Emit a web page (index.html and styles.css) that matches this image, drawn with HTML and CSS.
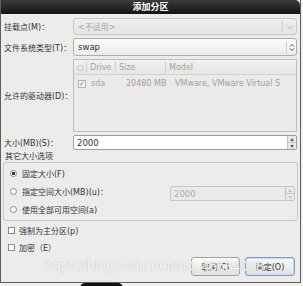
FILE: index.html
```html
<!DOCTYPE html>
<html>
<head>
    <meta charset="UTF-8">
    <title>添加分区</title>
    <link rel="stylesheet" href="styles.css">
</head>
<body>
    <div class="dialog">
        <div class="titlebar">添加分区</div>
        <div class="content">
            <div class="form">
                <div class="label">挂载点(M)：</div>
                <div class="combo combo-off">
                    <span class="combo-text">&lt;不适用&gt;</span>
                    <span class="combo-btn">
                        <svg width="8" height="6" viewBox="0 0 8 6"><path d="M1 1.5 L4 4.5 L7 1.5" fill="none" stroke="#b5b3b0" stroke-width="1"/></svg>
                    </span>
                </div>

                <div class="label">文件系统类型(T)：</div>
                <div class="combo">
                    <span class="combo-text">swap</span>
                    <span class="combo-btn narrow">
                        <svg width="6" height="9" viewBox="0 0 6 9"><path d="M1 3.5 L3 1.5 L5 3.5 M1 5.5 L3 7.5 L5 5.5" fill="none" stroke="#555" stroke-width="1"/></svg>
                    </span>
                </div>

                <div class="label">允许的驱动器(D)：</div>
                <div class="drives">
                    <div class="drives-head">
                        <span class="col c1">○</span>
                        <span class="col c2">Drive</span>
                        <span class="col c3">Size</span>
                        <span class="col c4">Model</span>
                    </div>
                    <div class="drives-row">
                        <span class="c1"><span class="tick">✓</span></span>
                        <span class="c2 pad-sda">sda</span>
                        <span class="c3 pad-size">20480 MB</span>
                        <span class="c4 pad-model">VMware, VMware Virtual S</span>
                    </div>
                </div>

                <div class="label">大小(MB)(S)：</div>
                <div class="spin">
                    <span class="spin-text">2000</span>
                    <span class="spin-btns">
                        <span class="spin-up">▴</span>
                        <span class="spin-down">▾</span>
                    </span>
                </div>
            </div>

            <div class="legend">其它大小选项</div>
            <div class="frame">
                <div class="opt">
                    <span class="radio on"></span>
                    <span>固定大小(F)</span>
                </div>
                <div class="opt">
                    <span class="radio"></span>
                    <span>指定空间大小(MB)(u)：</span>
                    <div class="spin spin-off">
                        <span class="spin-text">2000</span>
                        <span class="spin-btns">
                            <span class="spin-up">▴</span>
                            <span class="spin-down">▾</span>
                        </span>
                    </div>
                </div>
                <div class="opt">
                    <span class="radio"></span>
                    <span>使用全部可用空间(a)</span>
                </div>
            </div>

            <div class="checks">
                <div class="check-row"><span class="box"></span><span>强制为主分区(p)</span></div>
                <div class="check-row"><span class="box"></span><span>加密（E）</span></div>
            </div>

            <div class="actions">
                <button class="btn">取消(C)</button>
                <button class="btn btn-focus">确定(O)</button>
            </div>
        </div>
    </div>
    <div class="shadow-blob"></div>
    <div class="watermark">https://blog.csdn.net/m0_46634038</div>
</body>
</html>
```

FILE: styles.css
```css
* {
    box-sizing: border-box;
}

body {
    margin: 0;
    background: #f1f1f1;
    font-family: "DejaVu Sans", "Noto Sans CJK SC", sans-serif;
    font-size: 8px;
    color: #2e3436;
    position: relative;
    overflow: hidden;
}

.dialog {
    width: 301px;
    height: 283px;
    background: #edeceb;
    border: 1px solid #5e5e5e;
    border-top: none;
    display: flex;
    flex-direction: column;
}

.titlebar {
    height: 14px;
    line-height: 14px;
    background: linear-gradient(#3b3b3b, #141414);
    color: #fff;
    font-weight: bold;
    font-size: 9px;
    text-align: center;
    border-radius: 0 5px 0 0;
}

.content {
    padding: 4px 2px 0 3px;
    flex: 1;
    display: flex;
    flex-direction: column;
}

.form {
    display: grid;
    grid-template-columns: 69px 1fr;
    grid-template-rows: 17px 18px 73px 15px;
    row-gap: 3px;
    margin-right: 1px;
}

.form .label:first-child {
    margin-bottom: 1px;
}

.label {
    display: flex;
    align-items: center;
    white-space: nowrap;
}

.combo {
    display: flex;
    align-items: center;
    border: 1px solid #aeaca9;
    border-radius: 3px;
    background: linear-gradient(#fbfbfa, #ecebe9);
}

.combo-off {
    background: linear-gradient(#efeeec, #e6e5e3);
    border-color: #c9c7c4;
}

.combo-text {
    flex: 1;
    padding-left: 4px;
    font-size: 8.5px;
}

.combo-off .combo-text {
    color: #a8a6a3;
    font-size: 8px;
}

.combo-btn {
    width: 14px;
    height: 11px;
    border-left: 1px solid #cfcdca;
    display: flex;
    align-items: center;
    justify-content: center;
}

.combo-btn.narrow {
    width: 10px;
}

.drives {
    border: 1px solid #c0beba;
    background: #ebeae8;
    color: #a3a19e;
}

.drives-head {
    display: flex;
    height: 15px;
    align-items: center;
    background: linear-gradient(#f1f0ef, #e7e6e4);
    border-bottom: 1px solid #d4d2cf;
}

.drives-head .col {
    height: 11px;
    line-height: 11px;
    padding-left: 3px;
}

.drives-head .col + .col {
    border-left: 1px solid #cfcdca;
}

.c1 {
    width: 12px;
}

.c2 {
    width: 29px;
}

.c3 {
    width: 50px;
}

.c4 {
    flex: 1;
    white-space: nowrap;
    overflow: hidden;
}

.drives-row {
    display: flex;
    align-items: center;
    height: 14px;
    margin-top: 1px;
}

.tick {
    display: inline-block;
    width: 8px;
    height: 8px;
    margin-left: 4px;
    border: 1px solid #b9b7b4;
    background: #f2f1f0;
    font-size: 7px;
    line-height: 6px;
    text-align: center;
    color: #8d8b88;
}

.pad-sda {
    padding-left: 5px;
}

.pad-size {
    padding-left: 11px;
    white-space: nowrap;
}

.pad-model {
    padding-left: 10px;
}

.spin {
    display: flex;
    align-items: stretch;
    border: 1px solid #9f9d9a;
    border-radius: 2px;
    background: #fff;
}

.spin-text {
    flex: 1;
    padding-left: 3px;
    display: flex;
    align-items: center;
    font-size: 8.5px;
}

.spin-btns {
    width: 9px;
    display: flex;
    flex-direction: column;
    border-left: 1px solid #c6c4c1;
    background: #e9e8e6;
    font-size: 6px;
    line-height: 6px;
    text-align: center;
    color: #444;
}

.spin-btns span {
    flex: 1;
    display: flex;
    align-items: center;
    justify-content: center;
}

.spin-up {
    border-bottom: 1px solid #c6c4c1;
}

.spin-off {
    width: 125px;
    height: 15px;
    margin-left: auto;
    margin-top: 5px;
    background: #ebeae8;
    border-color: #c8c6c3;
}

.spin-off .spin-text {
    color: #adaba8;
}

.spin-off .spin-btns {
    color: #bdbbb8;
}

.legend {
    margin-top: 2px;
    height: 10px;
    line-height: 10px;
    padding-left: 1px;
}

.frame {
    margin-left: -1px;
    height: 59px;
    border: 1px solid #c9c7c4;
    border-radius: 3px;
    padding: 1px 2px 0 5px;
}

.opt {
    display: flex;
    align-items: center;
    height: 18px;
    gap: 5px;
}

.radio {
    width: 7px;
    height: 7px;
    border: 1px solid #8c8a87;
    border-radius: 50%;
    background: #fff;
    margin-left: 1px;
    flex: none;
}

.radio.on {
    background: radial-gradient(circle, #3c3c3c 1.6px, #fff 2px);
}

.checks {
    margin-top: 1px;
    padding-left: 4px;
}

.check-row {
    display: flex;
    align-items: center;
    height: 17px;
    gap: 4px;
}

.box {
    width: 7px;
    height: 7px;
    border: 1px solid #8c8a87;
    background: #fff;
}

.actions {
    display: flex;
    justify-content: flex-end;
    gap: 5px;
    margin-top: 1px;
    margin-right: 3px;
}

.btn {
    width: 49px;
    height: 19px;
    padding: 0;
    font-family: inherit;
    font-size: 8px;
    color: #2e3436;
    border: 1px solid #a8a6a3;
    border-radius: 3px;
    background: linear-gradient(#fafaf9, #e2e1df);
}

.btn-focus {
    width: 50px;
    border-color: #7f9fc9;
    box-shadow: inset 0 0 0 1px #c9d8ec;
}

.shadow-blob {
    width: 43px;
    height: 5px;
    margin-left: 80px;
    background: #111;
    border-radius: 8px 8px 0 0;
}

.watermark {
    position: absolute;
    left: 45px;
    top: 258px;
    font-family: "Liberation Sans", sans-serif;
    font-size: 14px;
    color: rgba(255, 255, 255, 0.9);
    text-shadow: 0 0 1px rgba(140, 140, 140, 0.7);
    white-space: nowrap;
    pointer-events: none;
}
```
